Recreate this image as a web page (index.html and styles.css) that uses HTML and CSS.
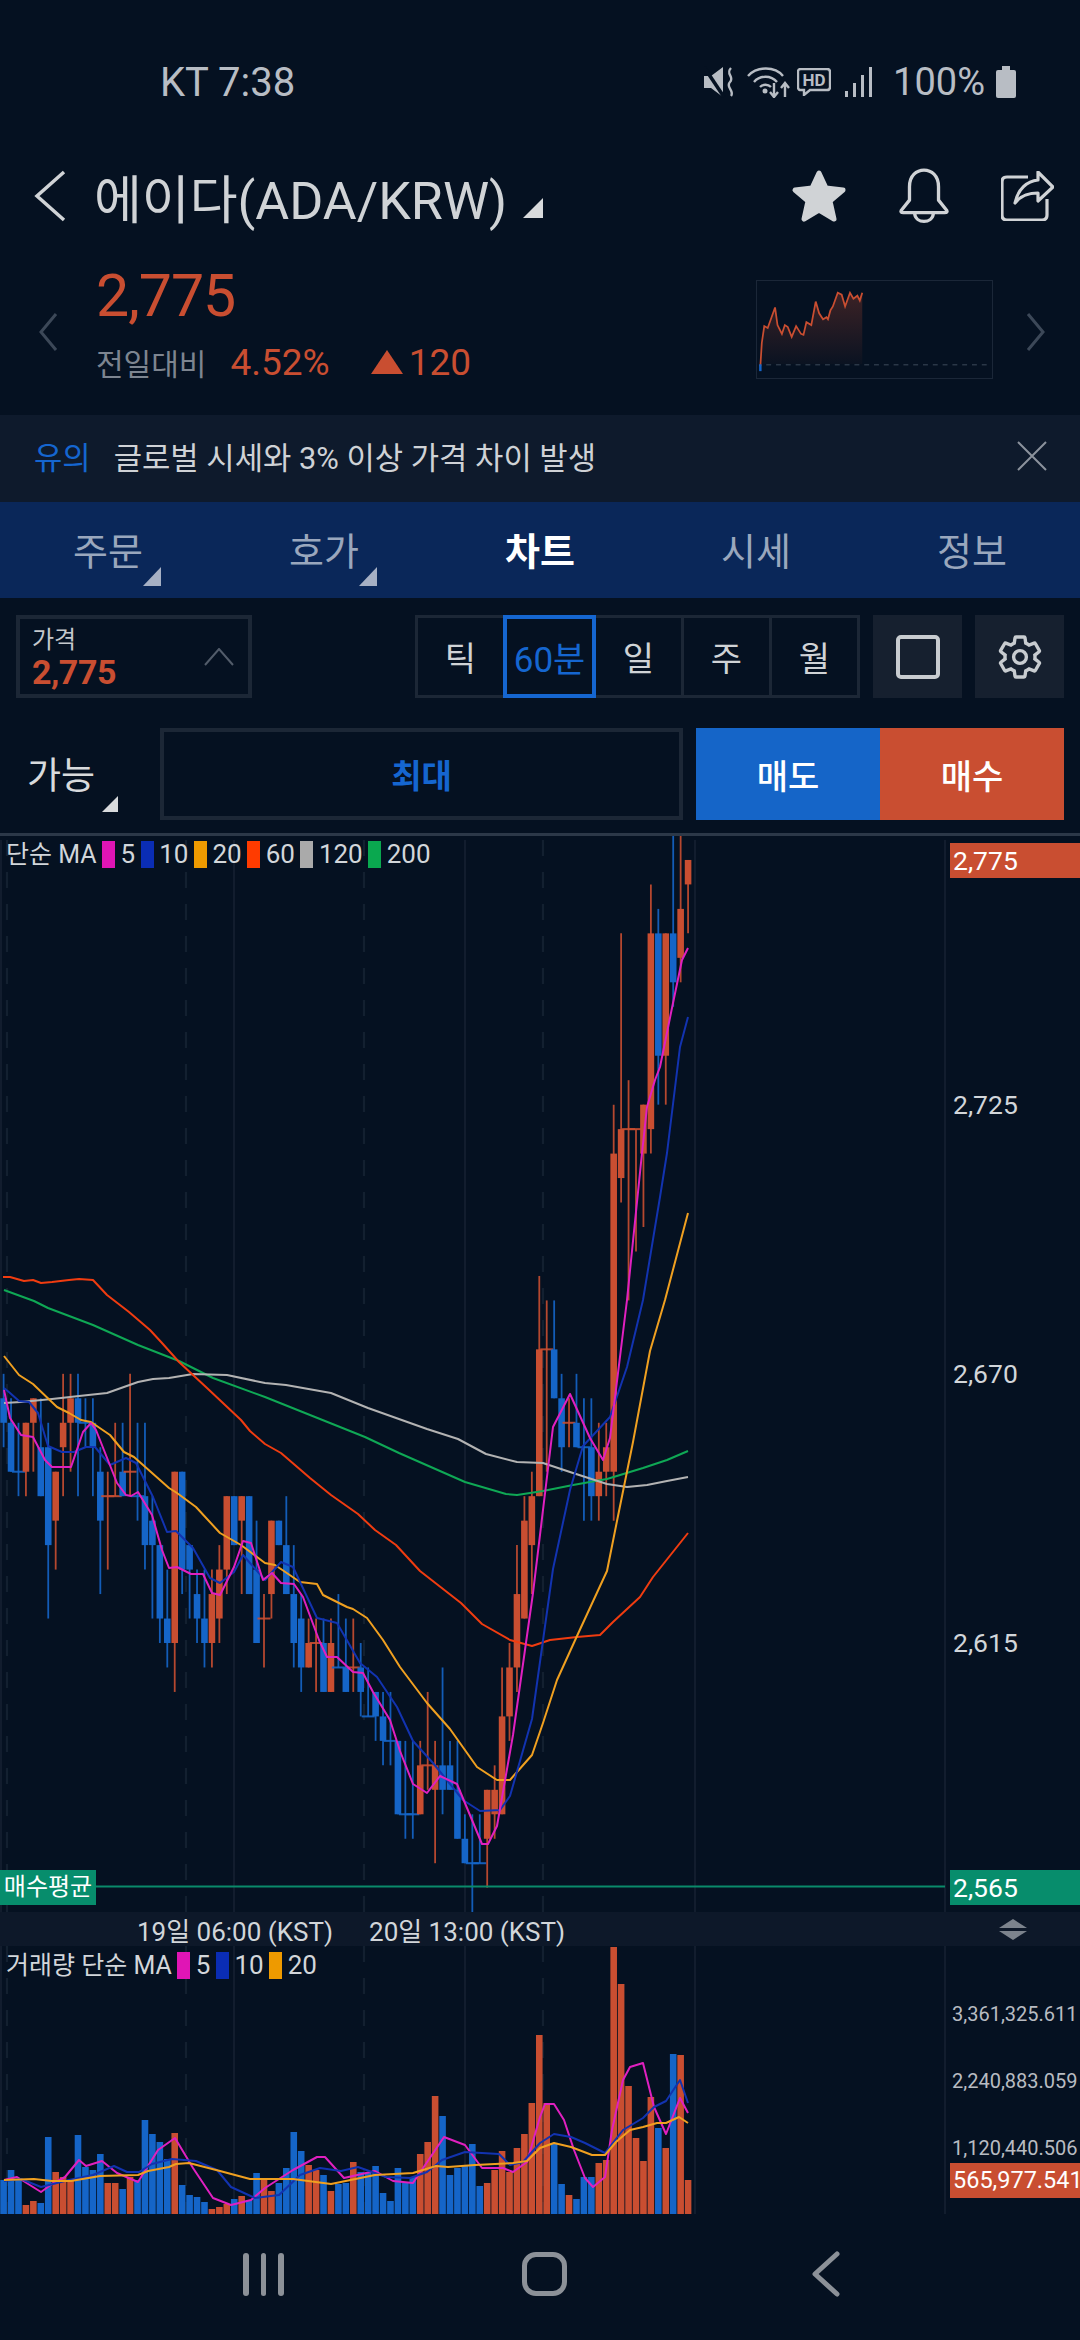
FILE: index.html
```html
<!DOCTYPE html>
<html lang="ko">
<head>
    <meta charset="UTF-8">
    <meta name="viewport" content="width=device-width, initial-scale=1.0">
    <title>에이다(ADA/KRW)</title>
    <link rel="stylesheet" href="styles.css">
</head>
<body>
    <!-- Status bar -->
    <div class="status">
        <span class="status-time">KT 7:38</span>
        <div class="status-icons">
            <svg class="ic-mute" viewBox="0 0 32 32">
                <path class="solid" d="M0 10H7L19 1V31L7 22H0Z"/>
                <path class="cut" d="M0 1L20 31"/>
                <path class="thin" d="M27 2C21 8 31 11 26 16C21 21 31 25 27 30"/>
            </svg>
            <svg class="ic-wifi" viewBox="0 0 44 32">
                <path class="thin" d="M1 10C10 0 28 0 36 10M7 16C13 9 24 9 30 16M13 21C16 18 21 18 24 21"/>
                <circle class="solid" cx="18" cy="25" r="2.5"/>
                <path class="thin" d="M27 17V30M23 26L27 31L31 26M38 31V18M34 22L38 17L42 22"/>
            </svg>
            <svg class="ic-hd" viewBox="0 0 34 28">
                <path class="thin" d="M4 1H30Q33 1 33 4V19Q33 22 30 22H13L7 27V22H4Q1 22 1 19V4Q1 1 4 1Z"/>
                <text x="17" y="18" text-anchor="middle">HD</text>
            </svg>
            <svg class="ic-signal" viewBox="0 0 28 30">
                <rect class="solid" x="0" y="24" width="3" height="6"/>
                <rect class="solid" x="8" y="16" width="3" height="14"/>
                <rect class="solid" x="16" y="8" width="3" height="22"/>
                <rect class="solid" x="24" y="0" width="3" height="30"/>
            </svg>
            <span class="battery-text">100%</span>
            <div class="battery"></div>
        </div>
    </div>

    <!-- Title -->
    <header class="title-row">
        <svg class="back" viewBox="0 0 32 52"><path d="M30 2L3 26L30 50"/></svg>
        <h1>에이다(ADA/KRW)</h1>
        <span class="corner corner-title"></span>
        <div class="title-icons">
            <svg class="ic-star" viewBox="0 0 56 54">
                <path d="M28 4L35 19L52 21L39 32L43 50L28 41L13 50L17 32L4 21L21 19Z"/>
            </svg>
            <svg class="ic-line ic-bell" viewBox="0 0 50 54">
                <path d="M3 41L11 31V18C11 7 18 2 25 2C32 2 39 7 39 18V31L47 41Q48 43 45 43H5Q2 43 3 41Z"/>
                <path d="M16 44C17 54 33 54 34 44"/>
            </svg>
            <svg class="ic-line ic-share" viewBox="0 0 53 50">
                <path d="M27 6H6Q1 6 1 11V44Q1 49 6 49H41Q46 49 46 44V28"/>
                <path d="M37 1L52 16L37 30V22C28 22 20 24 14 32C17 18 26 10 37 9Z"/>
            </svg>
        </div>
    </header>

    <!-- Quote -->
    <section class="quote">
        <svg class="side-arrow" viewBox="0 0 20 38"><path d="M18 1L3 19L18 37"/></svg>
        <div class="quote-info">
            <div class="quote-price">2,775</div>
            <div class="quote-change">
                <span class="change-label">전일대비</span>
                <span class="change-rate">4.52%</span>
                <span class="change-tri"></span>
                <span class="change-amount">120</span>
            </div>
        </div>
        <svg class="spark" viewBox="0 0 237 99">
            <defs>
                <linearGradient id="sparkFill" x1="0" y1="0" x2="0" y2="1">
                    <stop offset="0" stop-color="#c94e31" stop-opacity="0.28"/>
                    <stop offset="1" stop-color="#c94e31" stop-opacity="0.02"/>
                </linearGradient>
            </defs>
            <path class="spark-area" d="M2 87L3.5 63L6 46L9.5 48L17 27L19.5 45L24 54L27 45L30 47L34 57L38.5 46L43.5 54L46 55L49 42L54 45L58.5 21L62 33L66 39L69.5 37L71 39L73.5 30L76 26L81 12L85 14L88.5 26L93.5 12L97 18L101 15L103.5 20L106 12V85H2Z"/>
            <path class="spark-base" d="M8 85.5H237"/>
            <path class="spark-line" d="M2 87L3.5 63L6 46L9.5 48L17 27L19.5 45L24 54L27 45L30 47L34 57L38.5 46L43.5 54L46 55L49 42L54 45L58.5 21L62 33L66 39L69.5 37L71 39L73.5 30L76 26L81 12L85 14L88.5 26L93.5 12L97 18L101 15L103.5 20L106 12"/>
            <path class="spark-stub" d="M2 85V92"/>
        </svg>
        <svg class="side-arrow side-arrow-right" viewBox="0 0 20 38"><path d="M2 1L17 19L2 37"/></svg>
    </section>

    <!-- Alert -->
    <div class="alert">
        <span class="alert-tag">유의</span>
        <span class="alert-text">글로벌 시세와 3% 이상 가격 차이 발생</span>
        <svg class="alert-close" viewBox="0 0 30 30"><path d="M1 1L29 29M29 1L1 29"/></svg>
    </div>

    <!-- Tabs -->
    <nav class="tabs">
        <a class="tab">주문<span class="corner corner-tab"></span></a>
        <a class="tab">호가<span class="corner corner-tab"></span></a>
        <a class="tab active">차트</a>
        <a class="tab">시세</a>
        <a class="tab">정보</a>
    </nav>

    <!-- Chart toolbar -->
    <div class="toolbar">
        <div class="price-box">
            <div>
                <div class="price-box-label">가격</div>
                <div class="price-box-value">2,775</div>
            </div>
            <svg class="price-box-arrow" viewBox="0 0 30 18"><path d="M1 17L15 1L29 17"/></svg>
        </div>
        <div class="segments">
            <div class="segment">틱</div>
            <div class="segment active">60분</div>
            <div class="segment">일</div>
            <div class="segment">주</div>
            <div class="segment">월</div>
        </div>
        <div class="tool-btn"><div class="tool-square"></div></div>
        <div class="tool-btn">
            <svg class="ic-gear" viewBox="0 0 24 24">
                <path d="M19.43 12.98c.04-.32.07-.64.07-.98 0-.34-.03-.66-.07-.98l2.11-1.65c.19-.15.24-.42.12-.64l-2-3.46c-.12-.22-.37-.3-.61-.22l-2.49 1c-.52-.4-1.08-.73-1.69-.98l-.38-2.65C14.46 2.18 14.25 2 14 2h-4c-.25 0-.46.18-.49.42l-.38 2.65c-.61.25-1.17.59-1.69.98l-2.49-1c-.24-.08-.49 0-.61.22l-2 3.46c-.13.22-.07.49.12.64l2.11 1.65c-.04.32-.07.65-.07.98 0 .33.03.66.07.98l-2.11 1.65c-.19.15-.24.42-.12.64l2 3.46c.12.22.37.3.61.22l2.49-1c.52.4 1.08.73 1.69.98l.38 2.65c.03.24.24.42.49.42h4c.25 0 .46-.18.49-.42l.38-2.65c.61-.25 1.17-.59 1.69-.98l2.49 1c.24.08.49 0 .61-.22l2-3.46c.12-.22.07-.49-.12-.64l-2.11-1.65z"/>
                <circle cx="12" cy="12" r="3.2"/>
            </svg>
        </div>
    </div>

    <!-- Order row -->
    <div class="order">
        <div class="order-qty">가능<span class="corner corner-qty"></span></div>
        <div class="order-max">최대</div>
        <div class="order-btn sell">매도</div>
        <div class="order-btn buy">매수</div>
    </div>

    <!-- Price chart -->
    <div class="chart-main">
        <svg id="priceChart" class="chart-svg" viewBox="0 836 1080 1076"></svg>
        <div class="legend legend-main">
            <span class="legend-name">단순 MA</span>
            <i class="swatch ma5"></i><span>5</span>
            <i class="swatch ma10"></i><span>10</span>
            <i class="swatch ma20"></i><span>20</span>
            <i class="swatch ma60"></i><span>60</span>
            <i class="swatch ma120"></i><span>120</span>
            <i class="swatch ma200"></i><span>200</span>
        </div>
        <div class="tag tag-red tag-last">2,775</div>
        <div class="axis-label y-2725">2,725</div>
        <div class="axis-label y-2670">2,670</div>
        <div class="axis-label y-2615">2,615</div>
        <div class="avg-label">매수평균</div>
        <div class="tag tag-green tag-avg">2,565</div>
    </div>

    <!-- Time axis -->
    <div class="time-axis">
        <span>19일 06:00 (KST)</span>
        <span>20일 13:00 (KST)</span>
        <div class="resize-handle">
            <span class="resize-up"></span>
            <span class="resize-down"></span>
        </div>
    </div>

    <!-- Volume chart -->
    <div class="chart-volume">
        <svg id="volumeChart" class="chart-svg" viewBox="0 1946 1080 268"></svg>
        <div class="legend legend-volume">
            <span class="legend-name">거래량 단순 MA</span>
            <i class="swatch ma5"></i><span>5</span>
            <i class="swatch ma10"></i><span>10</span>
            <i class="swatch ma20"></i><span>20</span>
        </div>
        <div class="volume-label v-high">3,361,325.611</div>
        <div class="volume-label v-mid">2,240,883.059</div>
        <div class="volume-label v-low">1,120,440.506</div>
        <div class="tag tag-red tag-volume">565,977.541</div>
    </div>

    <!-- Android navigation -->
    <div class="android-nav">
        <div class="nav-cell">
            <div class="nav-recent"><i></i><i></i><i></i></div>
        </div>
        <div class="nav-cell"><div class="nav-home"></div></div>
        <div class="nav-cell">
            <svg class="nav-back" viewBox="0 0 28 46"><path d="M25 3L3 23L25 43"/></svg>
        </div>
    </div>

    <script src="chart.js"></script>
</body>
</html>
```

FILE: styles.css
```css
* {
    box-sizing: border-box;
}
body {
    font-family: Roboto, "Noto Sans CJK KR", sans-serif;
    margin: 0;
    width: 1080px;
    height: 2340px;
    overflow: hidden;
    background-color: #051121;
    color: #d0d3d6;
}
svg path {
    fill: none;
}

/* status bar */
.status {
    height: 164px;
    padding: 0 64px 0 160px;
    display: flex;
    align-items: center;
    justify-content: space-between;
    font-size: 38px;
    color: #b8bdc4;
}
.status-time {
    font-size: 40px;
}
.status-icons {
    display: flex;
    align-items: center;
}
.status svg .solid {
    fill: #b8bdc4;
}
.status svg .thin {
    stroke: #b8bdc4;
    stroke-width: 2.4;
}
.status svg .cut {
    stroke: #051121;
    stroke-width: 3.5;
}
.ic-mute {
    width: 32px;
    height: 32px;
}
.ic-wifi {
    width: 44px;
    height: 32px;
    margin-left: 11px;
}
.ic-hd {
    width: 34px;
    height: 28px;
    margin-left: 6px;
}
.ic-hd text {
    font-size: 17px;
    font-weight: 700;
    fill: #b8bdc4;
}
.ic-signal {
    width: 28px;
    height: 30px;
    margin-left: 14px;
}
.battery-text {
    margin-left: 20px;
}
.battery {
    position: relative;
    width: 20px;
    height: 28px;
    margin: 4px 0 0 11px;
    background-color: #b8bdc4;
    border-radius: 2px;
}
.battery::before {
    content: "";
    position: absolute;
    left: 6px;
    top: -4px;
    width: 8px;
    height: 4px;
    background-color: #b8bdc4;
}

/* title */
.title-row {
    height: 64px;
    padding: 0 26px 0 34px;
    display: flex;
    align-items: center;
}
.back {
    width: 32px;
    height: 52px;
}
.back path {
    stroke: #d0d3d6;
    stroke-width: 3.5;
}
h1 {
    margin: 0 0 0 28px;
    font-size: 52px;
    font-weight: 400;
}
.corner {
    display: block;
    width: 0;
    height: 0;
    border-left: 18px solid transparent;
    border-bottom: 19px solid #d8dadc;
}
.corner-title {
    margin: 24px 0 0 16px;
    border-left-width: 20px;
    border-bottom-width: 20px;
}
.title-icons {
    margin-left: auto;
    display: flex;
    align-items: center;
    gap: 51px;
}
.ic-star {
    width: 56px;
    height: 54px;
}
.ic-star path {
    fill: #d0d3d6;
    stroke: #d0d3d6;
    stroke-width: 5;
    stroke-linejoin: round;
}
.ic-line path {
    stroke: #d0d3d6;
    stroke-width: 3.2;
    stroke-linejoin: round;
}
.ic-bell {
    width: 52px;
    height: 56px;
}
.ic-share {
    width: 53px;
    height: 50px;
}

/* quote */
.quote {
    height: 187px;
    padding: 0 34px 0 38px;
    display: flex;
    align-items: flex-start;
}
.side-arrow {
    width: 20px;
    height: 38px;
    margin-top: 85px;
}
.side-arrow path {
    stroke: #3c4858;
    stroke-width: 3;
}
.quote-info {
    margin-left: 38px;
    color: #c94e31;
}
.quote-price {
    margin-top: 34px;
    font-size: 59px;
    line-height: 68px;
    letter-spacing: -1px;
}
.quote-change {
    margin-top: 10px;
    display: flex;
    align-items: center;
    height: 44px;
}
.change-label {
    font-size: 30px;
    color: #7d8590;
}
.change-rate {
    margin-left: 24px;
    font-size: 37px;
}
.change-tri {
    margin-left: 41px;
    width: 0;
    height: 0;
    border-left: 16px solid transparent;
    border-right: 16px solid transparent;
    border-bottom: 24px solid #c94e31;
}
.change-amount {
    margin-left: 6px;
    font-size: 37px;
}
.spark {
    width: 237px;
    height: 99px;
    margin: 52px 0 0 auto;
    border: 1.5px solid #1b2738;
}
.spark-area {
    fill: url(#sparkFill) !important;
}
.spark-base {
    stroke: #2a3747;
    stroke-width: 1.5;
    stroke-dasharray: 5 5;
}
.spark-line {
    stroke: #c94e31;
    stroke-width: 1.8;
}
.spark-stub {
    stroke: #1565c8;
    stroke-width: 2.5;
}
.side-arrow-right {
    margin-left: 33px;
}

/* alert */
.alert {
    height: 87px;
    padding: 0 33px 6px 34px;
    display: flex;
    align-items: center;
    background-color: #0e1a2c;
    font-size: 30.8px;
    color: #cfd2d6;
}
.alert-tag {
    color: #1566d0;
    margin-right: 23px;
}
.alert-close {
    width: 30px;
    height: 30px;
    margin-left: auto;
}
.alert-close path {
    stroke: #8b929c;
    stroke-width: 2;
}

/* tabs */
.tabs {
    height: 96px;
    display: flex;
    background-color: #0a2759;
}
.tab {
    position: relative;
    flex: 1;
    display: flex;
    align-items: center;
    justify-content: center;
    padding-bottom: 3px;
    font-size: 38px;
    color: #9aa7bd;
}
.tab.active {
    color: #fff;
    font-weight: 700;
}
.corner-tab {
    position: absolute;
    right: 55px;
    bottom: 12px;
    border-bottom-color: #a6b0c4;
}

/* toolbar */
.toolbar {
    height: 83px;
    margin-top: 17px;
    padding: 0 16px;
    display: flex;
}
.price-box {
    width: 236px;
    padding: 0 14px 0 12px;
    display: flex;
    align-items: center;
    justify-content: space-between;
    border: 4px solid #1c2736;
}
.price-box-label {
    font-size: 24px;
    line-height: 30px;
    color: #c4c8cc;
}
.price-box-value {
    font-size: 34px;
    line-height: 34px;
    font-weight: 700;
    letter-spacing: -0.5px;
    color: #c94e31;
}
.price-box-arrow {
    width: 30px;
    height: 18px;
}
.price-box-arrow path {
    stroke: #525c6a;
    stroke-width: 2;
}
.segments {
    width: 445px;
    margin-left: 163px;
    display: flex;
}
.segment {
    position: relative;
    flex: 1;
    margin-left: -3px;
    display: flex;
    align-items: center;
    justify-content: center;
    border: 3px solid #1c2736;
    font-size: 34px;
    color: #d0d3d6;
}
.segment:first-child {
    margin-left: 0;
}
.segment.active {
    z-index: 1;
    border: 4px solid #1566d0;
    font-size: 35px;
    color: #1566d0;
}
.tool-btn {
    width: 89px;
    margin-left: 13px;
    display: flex;
    align-items: center;
    justify-content: center;
    background-color: #16202f;
}
.tool-square {
    width: 44px;
    height: 44px;
    border: 4px solid #c8ccd0;
    border-radius: 5px;
}
.ic-gear {
    width: 48px;
    height: 48px;
}
.ic-gear path, .ic-gear circle {
    fill: none;
    stroke: #c8ccd0;
    stroke-width: 1.7;
}

/* order row */
.order {
    height: 92px;
    margin-top: 30px;
    padding: 0 16px 0 27px;
    display: flex;
}
.order-qty {
    position: relative;
    width: 133px;
    display: flex;
    align-items: center;
    font-size: 37px;
    color: #d8dadc;
    padding-bottom: 2px;
}
.corner-qty {
    position: absolute;
    left: 75px;
    bottom: 8px;
    border-left-width: 16px;
    border-bottom-width: 16px;
}
.order-max {
    width: 523px;
    display: flex;
    align-items: center;
    justify-content: center;
    border: 4px solid #1c2736;
    font-size: 33px;
    font-weight: 700;
    color: #1566d0;
}
.order-btn {
    width: 184px;
    display: flex;
    align-items: center;
    justify-content: center;
    font-size: 34px;
    font-weight: 500;
    color: #fff;
}
.order-btn.sell {
    margin-left: 13px;
    background-color: #1565c8;
}
.order-btn.buy {
    background-color: #c94e31;
}

/* charts */
.chart-main {
    position: relative;
    height: 1079px;
    margin-top: 13px;
    border-top: 3px solid #2c3848;
}
.chart-volume {
    position: relative;
    height: 268px;
}
.chart-svg {
    position: absolute;
    left: 0;
    top: 0;
    width: 1080px;
    height: 100%;
}
.chart-main .chart-svg {
    height: 1076px;
}
.legend {
    position: absolute;
    left: 6px;
    display: flex;
    align-items: center;
    gap: 5.5px;
    font-size: 26px;
    line-height: 27px;
    color: #d2d6da;
}
.legend-main {
    top: 5px;
}
.legend-main .legend-name {
    font-size: 25px;
}
.legend-volume {
    top: 6px;
}
.legend-volume .legend-name {
    font-size: 25px;
}
.swatch {
    width: 13px;
    height: 27px;
}
.ma5 { background-color: #e015b5; }
.ma10 { background-color: #0a2db5; }
.ma20 { background-color: #ee9a00; }
.ma60 { background-color: #ff3b00; }
.ma120 { background-color: #aaaaaa; }
.ma200 { background-color: #0aa84f; }

.tag {
    position: absolute;
    left: 950px;
    width: 130px;
    height: 35px;
    padding-left: 3px;
    font-size: 26.5px;
    line-height: 35px;
    color: #fff;
}
.tag-red {
    background-color: #c94e31;
}
.tag-green {
    background-color: #078d6c;
}
.tag-last {
    top: 7px;
}
.tag-avg {
    top: 1034px;
}
.tag-volume {
    top: 217px;
    font-size: 23.5px;
}
.axis-label {
    position: absolute;
    left: 953px;
    font-size: 26.5px;
    line-height: 30px;
    color: #d2d6da;
}
.y-2725 { top: 254px; }
.y-2670 { top: 523px; }
.y-2615 { top: 792px; }
.avg-label {
    position: absolute;
    left: 0;
    top: 1034px;
    width: 96px;
    height: 35px;
    background-color: #078d6c;
    font-size: 24px;
    line-height: 34px;
    text-align: center;
    color: #fff;
}
.volume-label {
    position: absolute;
    left: 952px;
    font-size: 20px;
    line-height: 24px;
    color: #b8bcc2;
}
.v-high { top: 56px; }
.v-mid { top: 123px; }
.v-low { top: 190px; }

.time-axis {
    height: 34px;
    padding-left: 137px;
    display: flex;
    align-items: center;
    gap: 36px;
    background-color: #0d1829;
    font-size: 26px;
    color: #d2d6da;
}
.resize-handle {
    margin-left: auto;
    margin-right: 53px;
    display: flex;
    flex-direction: column;
    gap: 3px;
}
.resize-up, .resize-down {
    width: 0;
    height: 0;
    border-left: 14px solid transparent;
    border-right: 14px solid transparent;
}
.resize-up {
    border-bottom: 9px solid #7c838d;
}
.resize-down {
    border-top: 9px solid #7c838d;
}

/* bottom navigation */
.android-nav {
    height: 126px;
    padding-left: 123px;
    display: grid;
    grid-template-columns: repeat(3, 281px);
}
.nav-cell {
    display: flex;
    align-items: center;
    justify-content: center;
    padding-bottom: 6px;
}
.nav-recent {
    display: flex;
    gap: 12px;
}
.nav-recent i {
    width: 5.5px;
    height: 43px;
    border-radius: 3px;
    background-color: #8c9198;
}
.nav-home {
    width: 45px;
    height: 44px;
    border: 5px solid #8c9198;
    border-radius: 14px;
}
.nav-back {
    width: 28px;
    height: 46px;
}
.nav-back path {
    stroke: #8c9198;
    stroke-width: 5;
    stroke-linecap: round;
    stroke-linejoin: round;
}
```

FILE: chart.js
```js
// draws the candles, volume bars and moving averages into the two svgs
const SVG_NS = 'http://www.w3.org/2000/svg';
const RED = '#c94e31';
const BLUE = '#1565c8';
const MA_COLORS = { ma5: '#e020c0', ma10: '#1233b0', ma20: '#f0a020', ma60: '#f03c10', ma120: '#b3b3b3', ma200: '#0fa855' };

const candleX = i => 3.6 + 7.44 * i;
// the price moves in ticks, one tick is 24.47px
const tickY = n => 1398.3 + 24.47 * n;

const r = 'r', b = 'b';
// colour, body top, body bottom, wick top, wick bottom (in ticks)
const candles = [
    [b,0,1,-1,2], [b,1,3,0,3], [b,3,3,1,4], [r,1,3,1,4], [r,0,1,0,3],
    [b,2,4,0,4], [b,2,6,1,9], [r,3,5,3,7], [r,1,2,-1,4], [r,0,1,-1,3],
    [b,0,1,-1,4], [b,1,1,0,2], [b,1,2,0,4], [b,3,5,2,8], [r,4,4,3,7],
    [r,4,4,1,4], [b,3,4,1,4], [r,3,3,-1,4], [b,4,4,1,5], [b,4,6,1,7],
    [b,5,6,4,9], [b,6,9,6,10], [b,9,10,7,11], [r,3,10,3,12], [b,3,7,3,8],
    [b,6,7,6,9], [b,8,9,7,10], [b,9,10,7,11], [r,8,10,7,11], [r,7,9,6,10],
    [r,4,7,4,8], [b,4,6,4,6], [r,4,5,4,8], [b,4,8,4,8], [b,7,10,5,10],
    [r,9,9,8,11], [r,5,8,5,9], [b,5,6,5,6], [b,6,8,4,8], [b,8,10,6,11],
    [b,9,11,8,12], [r,10,11,9,11], [r,10,10,9,12], [b,10,12,9,12], [r,10,12,9,12],
    [b,11,11,8,11], [b,11,12,9,12], [r,11,11,9,12], [b,11,12,10,13], [b,13,13,11,13],
    [b,12,13,12,14], [b,13,14,12,15], [b,14,14,12,15], [b,14,17,14,17], [b,17,17,14,18],
    [b,17,17,14,18], [r,15,17,14,17], [r,15,15,12,16], [r,15,16,14,19], [b,15,16,11,17],
    [b,15,16,14,16], [b,16,18,14,18], [b,18,19,17,19], [b,19,19,17,21], [b,19,19,17,19],
    [r,16,18,16,20], [r,16,17,15,18], [r,13,17,11,17], [r,11,13,10,14], [r,8,11,6,12],
    [r,5,9,4,9], [r,4,6,3,8], [r,-2,4,-5,4], [r,-2,-2,-4,3], [b,-2,0,-4,0],
    [b,0,2,-1,3], [r,1,1,0,2], [b,1,2,-1,2], [b,2,2,0,5], [b,2,4,0,5],
    [r,3,4,1,5], [r,2,3,1,4], [r,-10,3,-12,5], [r,-11,-9,-19,-8], [r,-11,-11,-13,-4],
    [r,-11,-11,-11,-6], [r,-12,-10,-12,-7], [r,-19,-11,-21,-10], [b,-19,-14,-20,-12], [r,-19,-14,-19,-12],
    [b,-19,-17,-23,-16], [r,-20,-18,-23,-17], [r,-22,-21,-22,-19]
];

// bar heights in px, negative is a blue bar
const volumes = [
    -34,-44,-34,9,13,-11,-77,42,37,34,
    -79,-47,-44,-60,31,31,-25,37,-34,-94,
    -80,-72,-55,81,-29,-19,-17,-12,5,7,
    10,-15,18,-14,-41,35,23,-31,-46,-82,
    -63,49,44,-39,23,-30,-31,52,-42,-41,
    -48,-21,-13,-46,-31,-37,60,72,118,-98,
    -39,-46,-49,-70,-28,31,44,63,42,66,
    80,111,179,111,-70,-30,19,-15,-37,-37,
    51,54,267,230,128,76,53,117,-86,66,
    -160,159,34
];

const priceLines = {
    ma200: '4,1290 34,1301 48,1308 93,1325 138,1345 179,1361 213,1378 265,1397 300,1411 365,1437 399,1453 465,1482 506,1494 517,1495 543,1491 573,1485 607,1479 643,1468 667,1460 688,1451',
    ma120: '4,1403 21,1402 52,1399 79,1396 107,1393 138,1382 153,1379 169,1378 193,1374 227,1375 265,1383 286,1385 331,1393 368,1408 427,1429 458,1439 486,1454 517,1462 543,1463 573,1473 607,1484 627,1487 647,1485 667,1481 688,1477',
    ma60: '3,1277 10,1277 24,1281 33,1280 41,1283 52,1282 69,1280 79,1279 93,1280 107,1295 129,1312 150,1330 162,1343 179,1362 207,1388 241,1420 250,1431 265,1444 281,1453 310,1478 331,1495 358,1514 375,1530 396,1545 420,1571 461,1603 482,1624 510,1640 532,1646 550,1640 577,1637 600,1635 613,1622 640,1597 653,1577 688,1533',
    ma20: '4,1356 19,1375 33,1384 57,1407 69,1413 81,1420 91,1422 110,1435 124,1452 134,1457 169,1488 177,1493 196,1507 220,1533 241,1545 265,1563 275,1565 300,1582 317,1584 323,1595 347,1607 353,1609 367,1618 383,1640 400,1667 427,1703 450,1729 477,1767 497,1780 510,1780 532,1755 543,1723 557,1680 577,1636 607,1571 617,1521 633,1442 650,1351 665,1300 688,1213',
    ma10: '4,1388 10,1393 19,1401 29,1402 38,1413 48,1446 62,1452 74,1452 86,1447 95,1447 110,1465 126,1458 136,1463 153,1497 167,1532 176,1531 193,1548 210,1578 220,1583 234,1572 243,1555 250,1563 265,1580 281,1562 293,1567 317,1618 337,1623 360,1663 377,1677 397,1707 413,1741 433,1763 463,1800 480,1811 500,1810 510,1796 532,1719 553,1569 570,1490 583,1446 610,1417 627,1367 643,1300 660,1197 667,1153 680,1047 688,1017',
    ma5: '4,1390 10,1418 21,1435 33,1437 45,1460 52,1467 71,1467 83,1432 91,1423 96,1430 117,1483 126,1495 131,1496 138,1492 152,1515 162,1550 169,1568 177,1567 191,1574 203,1574 212,1593 220,1595 234,1567 243,1541 251,1543 263,1580 272,1573 281,1583 294,1584 303,1597 319,1640 327,1657 337,1657 353,1672 363,1673 373,1692 390,1720 400,1751 413,1784 427,1793 440,1776 457,1784 482,1844 488,1844 497,1826 513,1735 533,1593 553,1427 570,1394 590,1438 603,1460 610,1438 627,1300 642,1153 647,1107 655,1080 660,1067 673,1003 682,960 688,948'
};

const volumeLines = {
    ma5: '4,2180 17,2177 41,2192 52,2184 65,2177 79,2160 86,2166 102,2161 117,2173 138,2182 158,2150 175,2138 193,2168 213,2198 231,2205 251,2200 265,2188 293,2170 317,2157 325,2157 344,2178 375,2171 393,2181 413,2183 444,2137 465,2145 482,2168 503,2168 513,2172 527,2162 540,2117 545,2104 554,2104 564,2120 574,2150 585,2178 593,2187 605,2177 612,2130 623,2080 630,2067 643,2063 654,2107 666,2134 680,2098 688,2113',
    ma10: '4,2181 21,2179 41,2187 69,2180 93,2175 114,2166 127,2172 139,2172 152,2164 172,2159 196,2161 217,2170 231,2187 255,2198 279,2195 300,2175 320,2168 341,2171 358,2167 386,2177 410,2178 427,2172 442,2160 465,2152 499,2154 510,2165 523,2162 540,2143 554,2134 571,2137 585,2143 605,2153 623,2130 643,2118 654,2107 666,2101 680,2080 688,2103',
    ma20: '4,2180 34,2179 52,2181 71,2181 100,2176 138,2175 148,2171 169,2167 176,2164 189,2163 220,2171 250,2179 293,2179 331,2184 375,2175 413,2173 436,2166 448,2167 475,2165 513,2163 527,2161 540,2148 554,2143 571,2147 592,2155 605,2155 616,2142 630,2130 643,2127 657,2123 666,2123 679,2117 688,2123'
};

function add(parent, name, attrs) {
    const node = document.createElementNS(SVG_NS, name);
    for (const key in attrs) {
        node.setAttribute(key, attrs[key]);
    }
    parent.appendChild(node);
    return node;
}

function drawGrid(svg, top, bottom) {
    [1, 234, 465, 695, 945].forEach(x => {
        add(svg, 'line', { x1: x, x2: x, y1: top, y2: bottom, stroke: '#172233', 'stroke-width': 1.5 });
    });
    [7, 186, 364, 543].forEach(x => {
        add(svg, 'line', { x1: x, x2: x, y1: top, y2: bottom, stroke: '#132030', 'stroke-width': 2.2, 'stroke-dasharray': '16 16' });
    });
}

function drawLines(svg, lines) {
    for (const key in lines) {
        add(svg, 'polyline', { points: lines[key], fill: 'none', stroke: MA_COLORS[key], 'stroke-width': 2, 'stroke-linejoin': 'round' });
    }
}

function drawCandles(svg) {
    candles.forEach((c, i) => {
        const x = candleX(i);
        const color = c[0] === r ? RED : BLUE;
        add(svg, 'line', { x1: x, x2: x, y1: tickY(c[3]), y2: tickY(c[4]), stroke: color, 'stroke-width': 1.8, opacity: 0.9 });
        if (c[1] === c[2]) {
            add(svg, 'rect', { x: x - 6.5, y: tickY(c[1]) - 1, width: 13, height: 2, fill: color, opacity: 0.9 });
        } else {
            add(svg, 'rect', { x: x - 3.3, y: tickY(c[1]), width: 6.6, height: tickY(c[2]) - tickY(c[1]), fill: color });
        }
    });
}

function drawVolumes(svg) {
    volumes.forEach((v, i) => {
        const h = Math.abs(v);
        add(svg, 'rect', { x: candleX(i) - 3.3, y: 2214 - h, width: 6.6, height: h, fill: v < 0 ? BLUE : RED });
    });
}

const priceSvg = document.getElementById('priceChart');
drawGrid(priceSvg, 840, 1912);
drawCandles(priceSvg);
drawLines(priceSvg, priceLines);
add(priceSvg, 'line', { x1: 0, x2: 945, y1: 1886.5, y2: 1886.5, stroke: '#0a8a6a', 'stroke-width': 2 });

const volumeSvg = document.getElementById('volumeChart');
drawGrid(volumeSvg, 1946, 2214);
drawVolumes(volumeSvg);
drawLines(volumeSvg, volumeLines);
```
